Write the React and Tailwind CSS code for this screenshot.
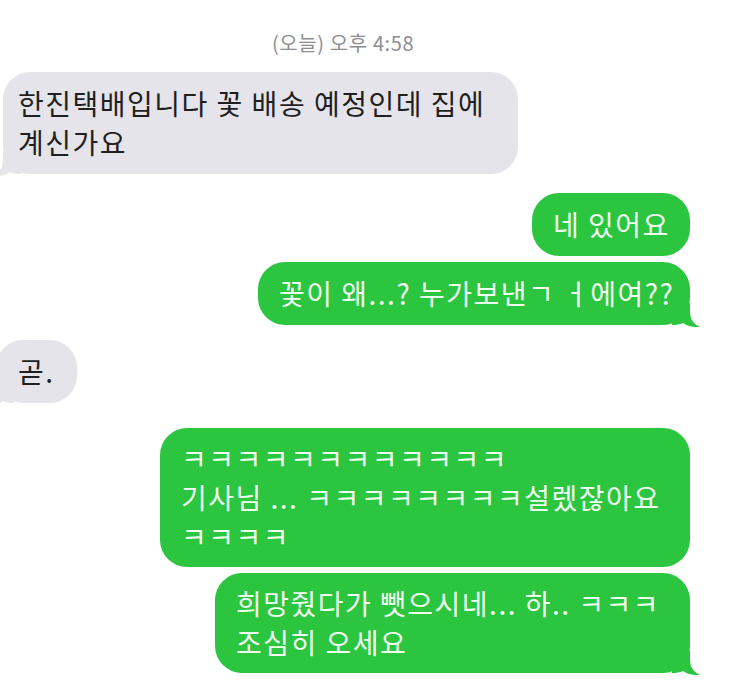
import React from 'react'

const GREEN = '#2cc53f'
const GRAY = '#e4e4ea'

const TailRight = () => (
    <svg className="absolute bottom-[-2px] right-[-10px]" width="28" height="24" viewBox="0 0 28 24">
        <path d="M0,0 H18 V8 C18,17 22,21 28,24 C21,24.5 15,23 11,20 C8,21.5 4,22 0,22 Z" fill={GREEN} />
    </svg>
)

const TailLeft = () => (
    <svg className="absolute bottom-[-2px] left-[-10px]" width="28" height="24" viewBox="0 0 28 24">
        <path d="M28,0 H10 V8 C10,17 6,21 0,24 C7,24.5 13,23 17,20 C20,21.5 24,22 28,22 Z" fill={GRAY} />
    </svg>
)

const Sent = ({ lines, width, mt, tail, py = 'py-[12px]' }) => (
    <div className={`relative self-end mr-[47px] ${mt} ${width} ${py} pl-[21px] pr-[16px] rounded-[27px] bg-[#2cc53f] text-[#effff0]`}>
        {lines.map((l, i) => (
            <div key={i} className="whitespace-nowrap">{l}</div>
        ))}
        {tail && <TailRight />}
    </div>
)

const App = () => {
    return (
        <div className="w-[737px] h-[700px] overflow-hidden bg-white flex flex-col text-[28px] leading-[39px] tracking-[1.5px] font-['Noto_Sans_CJK_KR','Noto_Sans',sans-serif]">
            {/* timestamp */}
            <div className="pt-[31px] pl-[272px] text-[20px] leading-[24px] tracking-[0.6px] text-[#8d8d92]">
                (오늘) 오후 4:58
            </div>

            {/* received 1 */}
            <div className="relative mt-[17px] ml-[3px] w-[515px] py-[12px] pl-[15px] pr-[16px] rounded-[27px] bg-[#e4e4ea] text-[#1f1f22]">
                <div className="whitespace-nowrap">한진택배입니다 꽃 배송 예정인데 집에</div>
                <div>계신가요</div>
                <TailLeft />
            </div>

            <Sent mt="mt-[19px]" width="w-[158px]" lines={['네 있어요']} />
            <Sent mt="mt-[6px]" width="w-[432px]" lines={['꽃이 왜...? 누가보낸ㄱ ㅓ에여??']} tail />

            {/* received 2 */}
            <div className="relative mt-[15px] ml-[-4px] w-[81px] py-[12px] pl-[22px] rounded-[27px] bg-[#e4e4ea] text-[#1f1f22]">
                곧.
                <TailLeft />
            </div>

            <Sent
                mt="mt-[25px]"
                width="w-[530px]"
                py="py-[11px]"
                lines={['ㅋㅋㅋㅋㅋㅋㅋㅋㅋㅋㅋㅋ', '기사님 ... ㅋㅋㅋㅋㅋㅋㅋㅋ설렜잖아요', 'ㅋㅋㅋㅋ']}
            />
            <Sent
                mt="mt-[6px]"
                width="w-[475px]"
                py="py-[11px]"
                lines={['희망줬다가 뺏으시네... 하.. ㅋㅋㅋ', '조심히 오세요']}
                tail
            />
        </div>
    )
}

export default App
